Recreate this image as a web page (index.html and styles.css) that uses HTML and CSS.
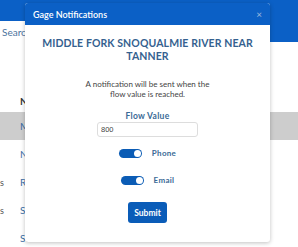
FILE: index.html
```html
<!DOCTYPE html>
<html>
<head>
    <meta charset="utf-8"/>
    <title>Gage Notifications</title>
    <link rel="stylesheet" href="styles.css">
</head>
<body>
<div class="app">
    <div class="topbar"></div>
    <div class="subbar">
        <div class="search">Search</div>
        <div class="panel"></div>
    </div>
    <div class="list">
        <div class="list-head"><span class="tag"></span>Name</div>
        <div class="row selected"><span class="tag"></span>Middle Fork Snoqualmie</div>
        <div class="row"><span class="tag"></span>North Fork Snoqualmie</div>
        <div class="row"><span class="tag">s</span>Raging River</div>
        <div class="row"><span class="tag">s</span>Snoqualmie River</div>
        <div class="row"><span class="tag"></span>South Fork</div>
    </div>
</div>

<div class="modal">
    <div class="modal-header">
        <span>Gage Notifications</span>
        <span class="close">&times;</span>
    </div>
    <div class="modal-body">
        <h2>MIDDLE FORK SNOQUALMIE RIVER NEAR TANNER</h2>
        <p class="info">A notification will be sent when the<br>flow value is reached.</p>
        <label class="field-label" for="flow">Flow Value</label>
        <input id="flow" class="field" type="text" value="800">
        <div class="switch-row">
            <span class="switch"><span class="knob"></span></span>
            <span class="switch-label">Phone</span>
        </div>
        <div class="switch-row second">
            <span class="switch"><span class="knob"></span></span>
            <span class="switch-label">Email</span>
        </div>
        <button class="submit" type="button">Submit</button>
    </div>
</div>
</body>
</html>
```

FILE: styles.css
```css
html, body {
    margin: 0;
    padding: 0;
}

body {
    font-family: Lato, "Liberation Sans", sans-serif;
    background: #fff;
    width: 298px;
    height: 247px;
    overflow: hidden;
}

.topbar {
    height: 21px;
    background: #0b60c6;
}

.subbar {
    height: 21px;
    display: flex;
    align-items: center;
}

.search {
    padding-left: 2px;
    font-size: 10px;
    color: #4d739e;
}

.panel {
    margin-left: auto;
    align-self: stretch;
    width: 150px;
    background: #0b60c6;
}

.list-head {
    height: 70px;
    box-sizing: border-box;
    padding-bottom: 4px;
    display: flex;
    align-items: flex-end;
    line-height: 14px;
    font-size: 10px;
    font-weight: bold;
    color: #333;
}

.row {
    height: 28px;
    display: flex;
    align-items: center;
    font-size: 10px;
    color: #3b6ea5;
    white-space: nowrap;
}

.row.selected {
    background: #cdcdcd;
}

.tag {
    width: 20px;
    flex: none;
    color: #555;
    font-size: 9px;
}

.modal {
    position: absolute;
    left: 25px;
    top: 3px;
    width: 245px;
    height: 239px;
    background: #fff;
    border-radius: 3px;
    box-shadow: 0 1px 4px rgba(0, 0, 0, 0.25);
    overflow: hidden;
}

.modal-header {
    height: 22px;
    background: #0b60c6;
    display: flex;
    align-items: center;
    justify-content: space-between;
    padding: 0 8px;
    color: #fff;
    font-size: 9px;
    font-weight: 600;
}

.close {
    font-size: 10px;
    color: #9db9dd;
    font-weight: normal;
}

.modal-body {
    display: flex;
    flex-direction: column;
    align-items: center;
    text-align: center;
}

.modal-body h2 {
    margin: 12px 0 0;
    width: 215px;
    font-size: 10.5px;
    line-height: 13px;
    font-weight: 700;
    color: #35618f;
    letter-spacing: 0.1px;
}

.info {
    margin: 16px 0 0;
    font-size: 8px;
    line-height: 10px;
    color: #444;
}

.field-label {
    margin-top: 12px;
    font-size: 8.5px;
    line-height: 10px;
    font-weight: bold;
    color: #3a6a96;
    letter-spacing: 0.3px;
}

.field {
    margin-top: 1px;
    width: 101px;
    height: 15px;
    box-sizing: border-box;
    border: 1px solid #ddd;
    border-radius: 3px;
    padding: 0 3px;
    font-family: "Liberation Sans", sans-serif;
    font-size: 7.5px;
    color: #444;
}

.switch-row {
    margin-top: 10px;
    height: 12px;
    display: flex;
    align-items: center;
    gap: 10px;
}

.switch-row.second {
    margin-top: 15px;
}

.switch {
    width: 23px;
    height: 9px;
    border-radius: 5px;
    background: #0b5cb5;
    display: flex;
    align-items: center;
    justify-content: flex-end;
    padding-right: 1px;
    box-sizing: border-box;
}

.knob {
    width: 7px;
    height: 7px;
    border-radius: 50%;
    background: #fff;
}

.switch-label {
    font-size: 8px;
    font-weight: bold;
    color: #3a6a96;
    letter-spacing: 0.3px;
}

.submit {
    margin-top: 16px;
    width: 39px;
    height: 21px;
    border: none;
    border-radius: 3px;
    background: #0a5cb8;
    color: #fff;
    font-family: Lato, "Liberation Sans", sans-serif;
    font-size: 8.5px;
    font-weight: bold;
    padding: 0;
}
```
